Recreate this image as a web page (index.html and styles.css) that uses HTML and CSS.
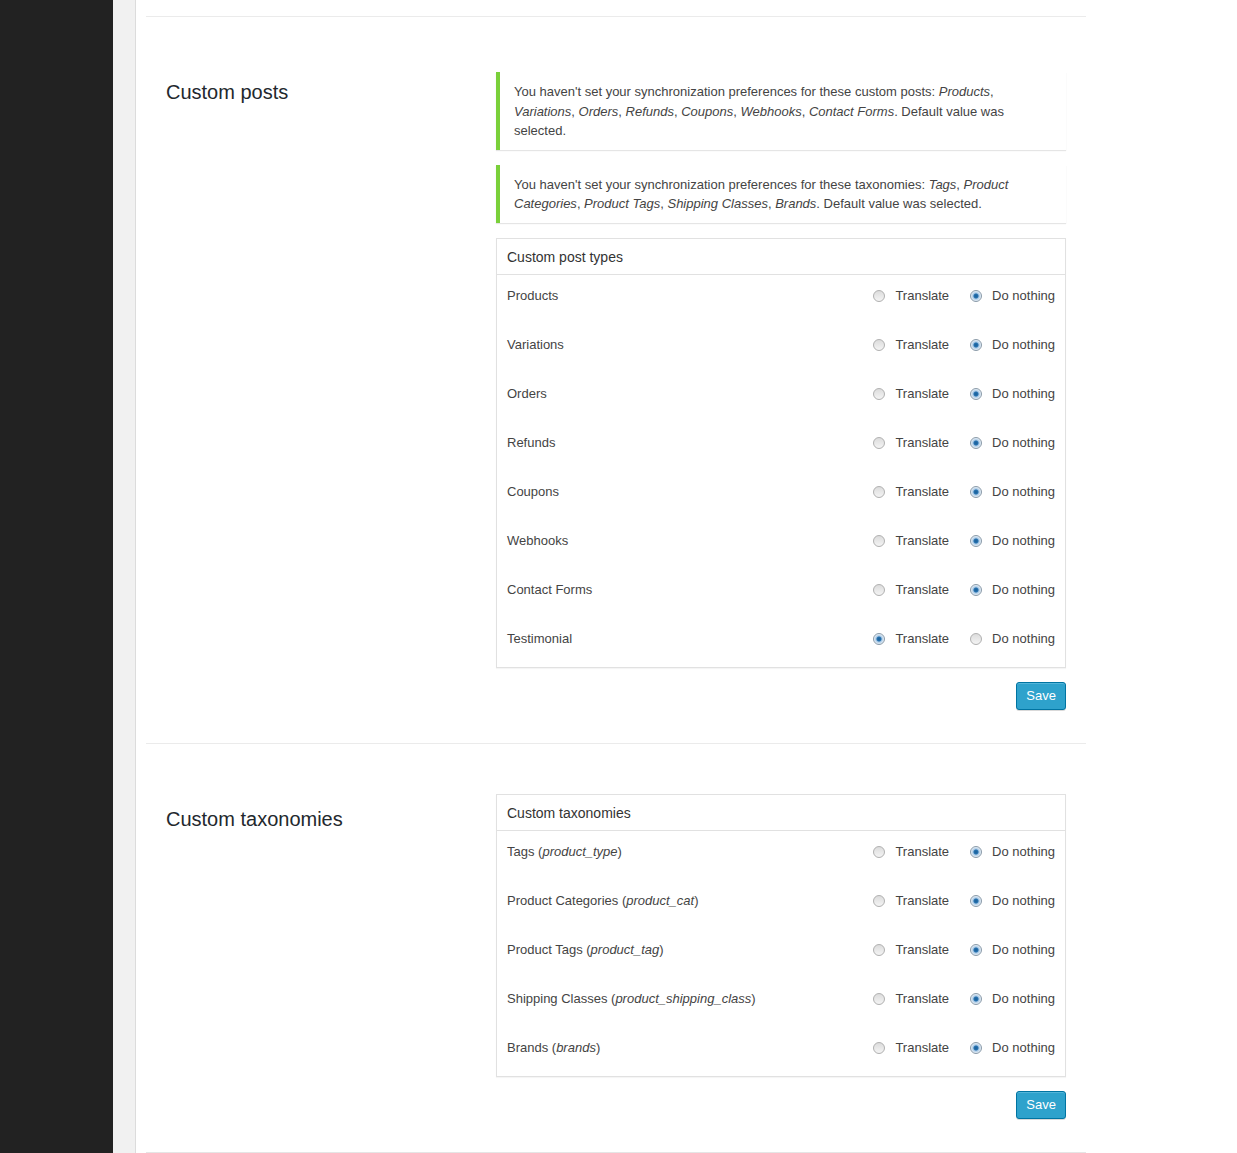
FILE: index.html
```html
<!DOCTYPE html>
<html lang="en">
<head>
  <meta charset="UTF-8">
  <meta name="viewport" content="width=device-width, initial-scale=1.0">
  <title>Multilingual Content Setup</title>
  <link rel="stylesheet" href="styles.css">
</head>
<body>
  <div class="layout">
    <div class="admin-menu"></div>
    <div class="gutter"></div>

    <main class="content">
      <div class="wrap">

        <section class="block">
          <h3 class="block-title">Custom posts</h3>
          <div class="block-body">
            <div class="notice">
              You haven't set your synchronization preferences for these custom posts: <em>Products</em>, <em>Variations</em>, <em>Orders</em>, <em>Refunds</em>, <em>Coupons</em>, <em>Webhooks</em>, <em>Contact Forms</em>. Default value was selected.
            </div>
            <div class="notice">
              You haven't set your synchronization preferences for these taxonomies: <em>Tags</em>, <em>Product Categories</em>, <em>Product Tags</em>, <em>Shipping Classes</em>, <em>Brands</em>. Default value was selected.
            </div>

            <div class="sync-table">
              <div class="sync-head">Custom post types</div>
              <div class="sync-row">
                <span class="sync-name">Products</span>
                <div class="sync-options">
                  <label class="option"><input type="radio" name="cpt1"> Translate</label>
                  <label class="option"><input type="radio" name="cpt1" checked> Do nothing</label>
                </div>
              </div>
              <div class="sync-row">
                <span class="sync-name">Variations</span>
                <div class="sync-options">
                  <label class="option"><input type="radio" name="cpt2"> Translate</label>
                  <label class="option"><input type="radio" name="cpt2" checked> Do nothing</label>
                </div>
              </div>
              <div class="sync-row">
                <span class="sync-name">Orders</span>
                <div class="sync-options">
                  <label class="option"><input type="radio" name="cpt3"> Translate</label>
                  <label class="option"><input type="radio" name="cpt3" checked> Do nothing</label>
                </div>
              </div>
              <div class="sync-row">
                <span class="sync-name">Refunds</span>
                <div class="sync-options">
                  <label class="option"><input type="radio" name="cpt4"> Translate</label>
                  <label class="option"><input type="radio" name="cpt4" checked> Do nothing</label>
                </div>
              </div>
              <div class="sync-row">
                <span class="sync-name">Coupons</span>
                <div class="sync-options">
                  <label class="option"><input type="radio" name="cpt5"> Translate</label>
                  <label class="option"><input type="radio" name="cpt5" checked> Do nothing</label>
                </div>
              </div>
              <div class="sync-row">
                <span class="sync-name">Webhooks</span>
                <div class="sync-options">
                  <label class="option"><input type="radio" name="cpt6"> Translate</label>
                  <label class="option"><input type="radio" name="cpt6" checked> Do nothing</label>
                </div>
              </div>
              <div class="sync-row">
                <span class="sync-name">Contact Forms</span>
                <div class="sync-options">
                  <label class="option"><input type="radio" name="cpt7"> Translate</label>
                  <label class="option"><input type="radio" name="cpt7" checked> Do nothing</label>
                </div>
              </div>
              <div class="sync-row">
                <span class="sync-name">Testimonial</span>
                <div class="sync-options">
                  <label class="option"><input type="radio" name="cpt8" checked> Translate</label>
                  <label class="option"><input type="radio" name="cpt8"> Do nothing</label>
                </div>
              </div>
            </div>

            <div class="actions">
              <button class="button-primary" type="button">Save</button>
            </div>
          </div>
        </section>

        <section class="block">
          <h3 class="block-title">Custom taxonomies</h3>
          <div class="block-body">
            <div class="sync-table">
              <div class="sync-head">Custom taxonomies</div>
              <div class="sync-row">
                <span class="sync-name">Tags (<em>product_type</em>)</span>
                <div class="sync-options">
                  <label class="option"><input type="radio" name="tax1"> Translate</label>
                  <label class="option"><input type="radio" name="tax1" checked> Do nothing</label>
                </div>
              </div>
              <div class="sync-row">
                <span class="sync-name">Product Categories (<em>product_cat</em>)</span>
                <div class="sync-options">
                  <label class="option"><input type="radio" name="tax2"> Translate</label>
                  <label class="option"><input type="radio" name="tax2" checked> Do nothing</label>
                </div>
              </div>
              <div class="sync-row">
                <span class="sync-name">Product Tags (<em>product_tag</em>)</span>
                <div class="sync-options">
                  <label class="option"><input type="radio" name="tax3"> Translate</label>
                  <label class="option"><input type="radio" name="tax3" checked> Do nothing</label>
                </div>
              </div>
              <div class="sync-row">
                <span class="sync-name">Shipping Classes (<em>product_shipping_class</em>)</span>
                <div class="sync-options">
                  <label class="option"><input type="radio" name="tax4"> Translate</label>
                  <label class="option"><input type="radio" name="tax4" checked> Do nothing</label>
                </div>
              </div>
              <div class="sync-row">
                <span class="sync-name">Brands (<em>brands</em>)</span>
                <div class="sync-options">
                  <label class="option"><input type="radio" name="tax5"> Translate</label>
                  <label class="option"><input type="radio" name="tax5" checked> Do nothing</label>
                </div>
              </div>
            </div>

            <div class="actions">
              <button class="button-primary" type="button">Save</button>
            </div>
          </div>
        </section>

      </div>
    </main>
  </div>
</body>
</html>
```

FILE: styles.css
```css
html, body {
  margin: 0;
  padding: 0;
  height: 100%;
}

body {
  font-family: "Liberation Sans", Arial, sans-serif;
  font-size: 13px;
  color: #444;
  background: #fff;
}

.layout {
  display: flex;
  min-height: 100%;
}

.admin-menu {
  width: 113px;
  flex-shrink: 0;
  background: #222;
}

.gutter {
  width: 22px;
  flex-shrink: 0;
  background: #f1f1f1;
  border-right: 1px solid #dcdcdc;
}

.content {
  flex: 1;
  background: #fff;
}

.wrap {
  width: 940px;
  margin-left: 10px;
  padding-top: 16px;
}

.block {
  display: grid;
  grid-template-columns: 350px 570px;
  padding: 50px 0 33px;
  border-top: 1px solid #ebebeb;
}

.block:last-child {
  border-bottom: 1px solid #e5e5e5;
}

.block-title {
  margin: 12px 0 0;
  padding-left: 20px;
  font-size: 20px;
  line-height: 26px;
  font-weight: normal;
  color: #23282d;
}

.notice {
  margin: 5px 0 15px;
  padding: 10px 12px 9px 14px;
  background: #fff;
  border-left: 4px solid #7ad03a;
  box-shadow: 0 1px 1px 0 rgba(0, 0, 0, 0.1);
  line-height: 19.5px;
}

.sync-table {
  border: 1px solid #e1e1e1;
  box-shadow: 0 1px 1px rgba(0, 0, 0, 0.04);
  background: #fff;
}

.sync-head {
  padding: 9px 10px 7px;
  line-height: 19px;
  font-size: 14px;
  color: #333;
  border-bottom: 1px solid #e1e1e1;
}

.sync-row {
  display: flex;
  justify-content: space-between;
  align-items: flex-start;
  height: 49px;
  box-sizing: border-box;
  padding: 11px 10px 0;
  line-height: 20px;
}

.sync-options {
  display: flex;
  gap: 21px;
}

.option {
  display: flex;
  align-items: center;
  cursor: pointer;
}

.option input {
  -webkit-appearance: none;
  appearance: none;
  width: 12px;
  height: 12px;
  margin: 1px 10px 0 0;
  border: 1px solid #b0b0b0;
  border-radius: 50%;
  background: linear-gradient(#dcdcdc, #f4f4f4);
  box-sizing: border-box;
}

.option input:checked {
  border-color: #8a9aa8;
  background: radial-gradient(circle, #1c5d94 0, #2471b0 2px, #a9c8e4 3px, #e8f1f9 5px);
}

.actions {
  display: flex;
  justify-content: flex-end;
  margin-top: 14px;
}

.button-primary {
  height: 28px;
  padding: 0 9px 1px;
  font-family: "Liberation Sans", Arial, sans-serif;
  font-size: 13px;
  line-height: 26px;
  color: #fff;
  background: #2ea2cc;
  border: 1px solid #0074a2;
  border-radius: 3px;
  box-shadow: inset 0 1px 0 rgba(120, 200, 230, 0.5), 0 1px 0 rgba(0, 0, 0, 0.15);
  cursor: pointer;
}
```
